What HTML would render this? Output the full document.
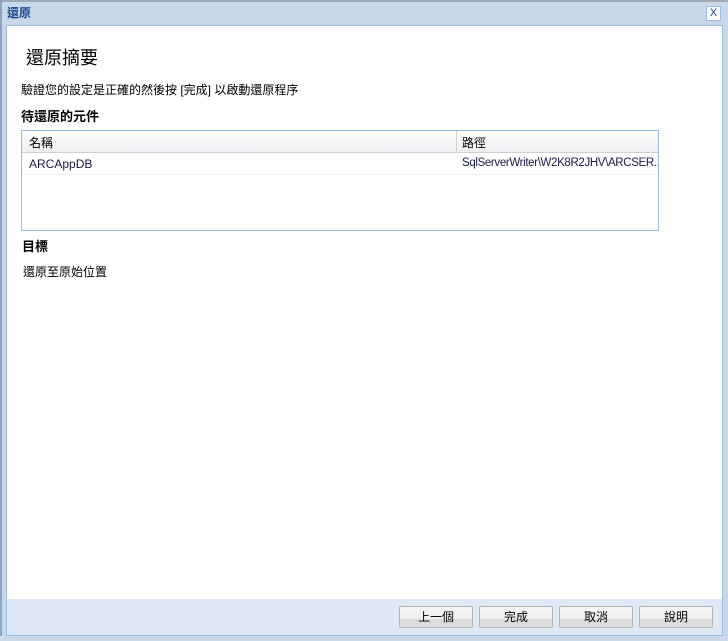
<!DOCTYPE html>
<html><head><meta charset="utf-8"><style>
*{margin:0;padding:0;box-sizing:border-box}
body{width:728px;height:641px;background:#c8d8e8;font-family:"Liberation Sans","Noto Sans CJK TC",sans-serif;font-size:12px;color:#000;position:relative;overflow:hidden}
.abs{position:absolute}
.top{left:0;top:0;width:728px;height:2px;background:#a0a8b4}
.ledge{left:0;top:0;width:2px;height:641px;background:#8ea4c0}
.title{left:7px;top:4px;font-size:12px;font-weight:bold;color:#15428b}
.close{left:706px;top:6px;width:15px;height:15px;border:1px solid #99bbe8;background:#fff;color:#15428b;font-size:11px;line-height:13px;text-align:center}
.panel{left:6px;top:25px;width:717px;height:611px;border:1px solid #99bbe8;background:#fff}
.footer{left:7px;top:599px;width:715px;height:36px;background:#dfe8f5}
.bottom{left:0;top:636px;width:728px;height:5px;background:#cdd8e8}
.btn{top:606px;width:74px;height:22px;border:1px solid #b4b4b4;border-radius:2px;background:linear-gradient(#f7f4f6 0,#f1eef0 60%,#dcdcdc 60%,#dcdcdc 100%);text-align:center;line-height:20px;font-size:12px}
.tbl{left:21px;top:130px;width:638px;height:101px;border:1px solid #99bbe8;background:#fff}
.hdr{left:0;top:0;width:636px;height:22px;background:linear-gradient(#fff,#eeeef2);border-bottom:1px solid #d0d0d0}
.row{left:0;top:22px;width:636px;height:22px;border-bottom:1px solid #ededed}
</style></head><body>
<div class="abs top"></div>
<div class="abs ledge"></div>
<div class="abs title">還原</div>
<div class="abs close">X</div>
<div class="abs panel"></div>
<div class="abs footer"></div>
<div class="abs bottom"></div>
<div class="abs" style="left:26px;top:44px;font-size:18px">還原摘要</div>
<div class="abs" style="left:21px;top:81px">驗證您的設定是正確的然後按 [完成] 以啟動還原程序</div>
<div class="abs" style="left:21px;top:106px;font-weight:bold;font-size:13px">待還原的元件</div>
<div class="abs tbl">
 <div class="abs hdr"></div>
 <div class="abs" style="left:434px;top:0;width:1px;height:22px;background:#d0d0d0"></div>
 <div class="abs" style="left:7px;top:3px">名稱</div>
 <div class="abs" style="left:440px;top:3px">路徑</div>
 <div class="abs row"></div>
 <div class="abs" style="left:7px;top:26px;color:#1a1a40">ARCAppDB</div>
 <div class="abs" style="left:440px;top:26px;color:#1a1a40;white-space:nowrap;font-size:11.5px;letter-spacing:-0.35px;width:196px;overflow:hidden">SqlServerWriter\W2K8R2JHV\ARCSER...</div>
</div>
<div class="abs" style="left:22px;top:236px;font-weight:bold;font-size:13px">目標</div>
<div class="abs" style="left:23px;top:263px">還原至原始位置</div>
<div class="abs btn" style="left:399px">上一個</div>
<div class="abs btn" style="left:479px">完成</div>
<div class="abs btn" style="left:559px">取消</div>
<div class="abs btn" style="left:639px">說明</div>
</body></html>
